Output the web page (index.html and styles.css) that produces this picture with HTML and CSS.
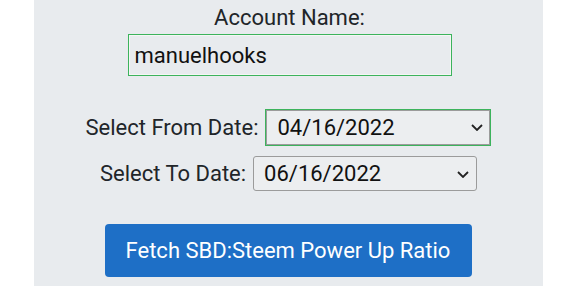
FILE: index.html
```html
<!DOCTYPE html>
<html>
<head>
  <title>SBD Power Up Ratio</title>
  <link rel="stylesheet" href="styles.css">
</head>
<body>
  <div class="panel">
    <label class="account-label" for="account">Account Name:</label>
    <input type="text" id="account" class="account-input" value="manuelhooks">

    <div class="date-row first">
      <label for="fromDate">Select From Date:</label>
      <span class="select-wrap">
        <select id="fromDate" class="date-select focused">
          <option>04/16/2022</option>
        </select>
        <svg class="chevron" width="12" height="7" viewBox="0 0 12 7"><path d="M1 1l5 5 5-5" fill="none" stroke="#222" stroke-width="1.8"/></svg>
      </span>
    </div>

    <div class="date-row">
      <label for="toDate">Select To Date:</label>
      <span class="select-wrap">
        <select id="toDate" class="date-select">
          <option>06/16/2022</option>
        </select>
        <svg class="chevron" width="12" height="7" viewBox="0 0 12 7"><path d="M1 1l5 5 5-5" fill="none" stroke="#222" stroke-width="1.8"/></svg>
      </span>
    </div>

    <button class="fetch-btn">Fetch SBD:Steem Power Up Ratio</button>
  </div>
</body>
</html>
```

FILE: styles.css
```css
body {
  margin: 0;
  background-color: #fff;
  font-family: Roboto, "Liberation Sans", sans-serif;
}
.panel {
  box-sizing: border-box;
  width: 509px;
  height: 286px;
  margin: 0 auto;
  padding-top: 1px;
  background-color: #e8ebee;
  color: #212529;
  font-size: 22px;
  line-height: 1.5;
  display: flex;
  flex-direction: column;
  align-items: center;
}
.account-label {
  display: block;
  height: 33px;
  margin-left: 3px;
}
.account-input {
  box-sizing: border-box;
  width: 324px;
  height: 42px;
  margin-left: 3px;
  padding: 0 6px;
  border: 1px solid #3cb35c;
  box-shadow: inset 0 0 0 1px #f4f6f4;
  background: transparent;
  font-family: inherit;
  font-size: 22px;
  color: #111;
  outline: none;
}
.date-row {
  display: flex;
  align-items: center;
  gap: 7px;
  margin-top: 10px;
  margin-left: 1px;
}
.date-row.first {
  margin-top: 33px;
}
.select-wrap {
  position: relative;
  display: inline-block;
}
.date-select {
  -webkit-appearance: none;
  appearance: none;
  box-sizing: border-box;
  width: 224px;
  height: 35px;
  padding: 0 10px;
  border: 1px solid #9b9b9b;
  border-radius: 3px;
  background: #eceef0;
  font-family: inherit;
  font-size: 22px;
  color: #111;
}
.date-select.focused {
  border-radius: 0;
  outline: 1px solid #3cb35c;
  margin: 1px;
}
.chevron {
  position: absolute;
  right: 8px;
  top: 15px;
  pointer-events: none;
}
.fetch-btn {
  flex-shrink: 0;
  margin-top: 33px;
  width: 367px;
  height: 53px;
  border: none;
  border-radius: 4px;
  background-color: #1e6fc6;
  color: #fff;
  font-family: inherit;
  font-size: 22px;
  cursor: pointer;
}
```
